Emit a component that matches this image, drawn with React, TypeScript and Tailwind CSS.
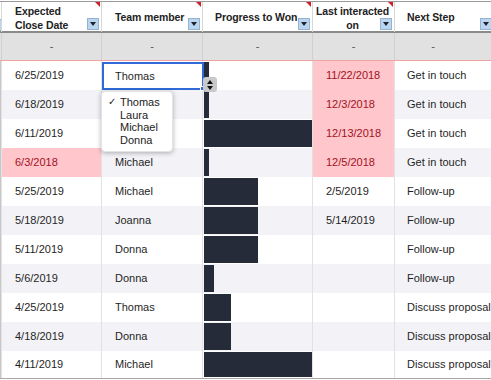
import React from "react";

type Row = {
  date: string;
  datePink?: boolean;
  member: string;
  progress: number; // px width
  last: string;
  lastPink?: boolean;
  next: string;
};

const rows: Row[] = [
  { date: "6/25/2019", member: "Thomas", progress: 5, last: "11/22/2018", lastPink: true, next: "Get in touch" },
  { date: "6/18/2019", member: "Laura", progress: 5, last: "12/3/2018", lastPink: true, next: "Get in touch" },
  { date: "6/11/2019", member: "Michael", progress: 108, last: "12/13/2018", lastPink: true, next: "Get in touch" },
  { date: "6/3/2018", datePink: true, member: "Michael", progress: 5, last: "12/5/2018", lastPink: true, next: "Get in touch" },
  { date: "5/25/2019", member: "Michael", progress: 54, last: "2/5/2019", next: "Follow-up" },
  { date: "5/18/2019", member: "Joanna", progress: 54, last: "5/14/2019", next: "Follow-up" },
  { date: "5/11/2019", member: "Donna", progress: 54, last: "", next: "Follow-up" },
  { date: "5/6/2019", member: "Donna", progress: 10, last: "", next: "Follow-up" },
  { date: "4/25/2019", member: "Thomas", progress: 27, last: "", next: "Discuss proposal" },
  { date: "4/18/2019", member: "Donna", progress: 27, last: "", next: "Discuss proposal" },
  { date: "4/11/2019", member: "Michael", progress: 108, last: "", next: "Discuss proposal" },
];

const grid = "grid grid-cols-[2px_100px_101px_110px_82px_96px]";

function FilterBtn() {
  return (
    <div className="w-[12px] h-[12px] bg-[#bcd5ee] border border-[#93b3d3] flex items-center justify-center">
      <div className="w-0 h-0 border-l-[3.5px] border-r-[3.5px] border-t-[4px] border-l-transparent border-r-transparent border-t-[#1d2330]" />
    </div>
  );
}

function Corner() {
  return (
    <div className="absolute top-0 right-[1px] w-0 h-0 border-l-[5px] border-t-[5px] border-l-transparent border-t-[#d0202a]" />
  );
}

export default function App() {
  return (
    <div
      className="w-[491px] h-[380px] overflow-hidden bg-white text-[11px] text-[#1f1f1f] relative"
      style={{ fontFamily: '"Liberation Sans", Arial, Helvetica, sans-serif' }}
    >
      <div className="pt-[1px]">
        {/* Header */}
        <div className={`${grid} h-[32px] border-t border-[#9a9a9a] border-b-2 border-b-[#8a8a8a] font-bold text-[10.5px] tracking-[-0.1px] leading-[14px] text-[#222]`}>
          <div className="relative border-r border-[#d8d8d8] overflow-hidden">
            <div className="absolute left-[-10px] top-[17px] w-[12px] h-[12px] bg-[#bcd5ee] border border-[#93b3d3]" />
          </div>
          <div className="relative border-r border-[#d8d8d8] pl-[13px] pt-[2px]">
            <div>Expected</div>
            <div>Close Date</div>
            <div className="absolute right-[2px] top-[16px]"><FilterBtn /></div>
            <Corner />
          </div>
          <div className="relative border-r border-[#d8d8d8] pl-[13px] flex items-center">
            <div className="-mt-[1px]">Team member</div>
            <div className="absolute right-[2px] top-[16px]"><FilterBtn /></div>
            <Corner />
          </div>
          <div className="relative border-r border-[#d8d8d8] pl-[12px] flex items-center">
            <div className="-mt-[1px] whitespace-nowrap">Progress to Won</div>
            <div className="absolute right-[2px] top-[16px]"><FilterBtn /></div>
            <Corner />
          </div>
          <div className="relative border-r border-[#d8d8d8] pt-[2px] text-center pr-[2px]">
            <div className="whitespace-nowrap">Last interacted</div>
            <div>on</div>
            <div className="absolute right-[2px] top-[16px]"><FilterBtn /></div>
            <Corner />
          </div>
          <div className="relative pl-[12px] flex items-center">
            <div className="-mt-[1px]">Next Step</div>
            <div className="absolute right-[-1px] top-[16px]"><FilterBtn /></div>
          </div>
        </div>

        {/* Filter row */}
        <div className={`${grid} h-[28px] bg-[#e1e1e1] border-b border-[#f0a3a3] text-[#555]`}>
          <div className="border-r border-[#d0d0d0]" />
          {[0, 1, 2, 3].map((i) => (
            <div key={i} className="border-r border-[#d0d0d0] flex items-center justify-center">-</div>
          ))}
          <div className="flex items-center justify-center pr-[20px]">-</div>
        </div>

        {/* Data rows */}
        {rows.map((r, i) => (
          <div
            key={i}
            className={`${grid} ${i % 2 === 1 ? "bg-[#f3f3f7]" : "bg-white"} ${i === rows.length - 1 ? "border-b border-[#a8a8a8] h-[28px]" : "h-[29px]"}`}
          >
            <div className="border-l border-[#c8c8c8] border-r border-r-[#e2e2e2]" />
            <div
              className={`border-r border-[#e2e2e2] pl-[13px] flex items-center ${r.datePink ? "bg-[#ffc6cc] text-[#a3111d]" : ""}`}
            >
              {r.date}
            </div>
            <div className="border-r border-[#e2e2e2] pl-[13px] flex items-center">
              {i === 0 || i === 1 || i === 2 ? "" : r.member}
            </div>
            <div className="border-r border-[#e2e2e2] py-[1px] pl-[1px]">
              <div className="h-full bg-[#262b3a]" style={{ width: r.progress }} />
            </div>
            <div
              className={`border-r border-[#e2e2e2] pl-[13px] flex items-center ${r.lastPink ? "bg-[#ffc6cc] text-[#a3111d]" : ""}`}
            >
              {r.last}
            </div>
            <div className="pl-[12px] flex items-center whitespace-nowrap">{r.next}</div>
          </div>
        ))}
      </div>

      {/* Cell editor */}
      <div className="absolute left-[102px] top-[62px] w-[102px] h-[28px] border-2 border-[#2f6ad8] bg-white pl-[11px] flex items-center">
        Thomas
        <div className="absolute right-[-3px] bottom-[-3px] w-[5px] h-[5px] bg-[#2f6ad8] border border-white" />
      </div>

      {/* Spinner */}
      <div className="absolute left-[203px] top-[77px] w-[14px] h-[15px] rounded-[3px] bg-[#c9c9c9] flex flex-col items-center justify-center gap-[2px]">
        <div className="w-0 h-0 border-l-[3px] border-r-[3px] border-b-[4px] border-l-transparent border-r-transparent border-b-[#111]" />
        <div className="w-0 h-0 border-l-[3px] border-r-[3px] border-t-[4px] border-l-transparent border-r-transparent border-t-[#111]" />
      </div>

      {/* Dropdown menu */}
      <div className="absolute left-[101px] top-[91px] w-[72px] h-[61px] bg-white rounded-[4px] shadow-[0_1px_5px_rgba(0,0,0,0.3)] border border-[#e4e4e4] pt-[4px] text-[11px] leading-[12.5px] text-[#222]">
        <div className="flex">
          <span className="w-[18px] pl-[6px] text-[10px]">✓</span>
          <span>Thomas</span>
        </div>
        <div className="pl-[18px]">Laura</div>
        <div className="pl-[18px]">Michael</div>
        <div className="pl-[18px]">Donna</div>
      </div>
    </div>
  );
}
